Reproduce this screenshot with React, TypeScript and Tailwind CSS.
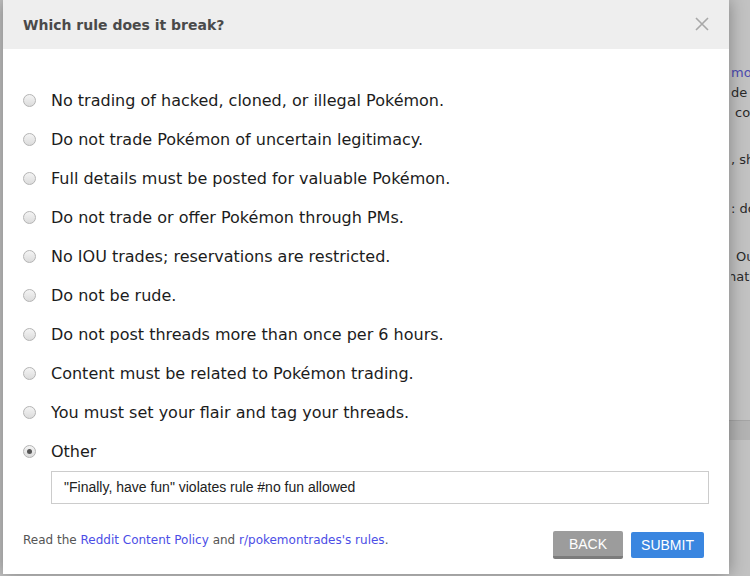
import React from 'react';

const rules = [
  'No trading of hacked, cloned, or illegal Pokémon.',
  'Do not trade Pokémon of uncertain legitimacy.',
  'Full details must be posted for valuable Pokémon.',
  'Do not trade or offer Pokémon through PMs.',
  'No IOU trades; reservations are restricted.',
  'Do not be rude.',
  'Do not post threads more than once per 6 hours.',
  'Content must be related to Pokémon trading.',
  'You must set your flair and tag your threads.',
  'Other',
];

function Radio({ checked }: { checked?: boolean }) {
  return (
    <span className="flex items-center justify-center w-[13px] h-[13px] rounded-full border border-[#b4b4b4] bg-gradient-to-b from-[#f4f4f4] to-[#dcdcdc] shrink-0">
      {checked && <span className="w-[5px] h-[5px] rounded-full bg-[#555]" />}
    </span>
  );
}

export default function App() {
  return (
    <div className="relative w-[750px] h-[576px] overflow-hidden bg-[#c2c2c2] font-['DejaVu_Sans',Verdana,sans-serif]">
      {/* page behind the overlay */}
      <div className="flex">
        <div className="w-[731px] shrink-0" />
        <div className="w-[19px] overflow-hidden flex flex-col text-[13px] leading-[20px] text-[#2a2a2a] whitespace-nowrap">
          <div className="h-[63px]" />
          <div className="text-[#4b4bb0]">mo</div>
          <div>de</div>
          <div className="pl-[4px]">co</div>
          <div className="h-[27px]" />
          <div>, sh</div>
          <div className="h-[29px]" />
          <div>: do</div>
          <div className="h-[28px]" />
          <div className="pl-[5px]">Ou</div>
          <div className="-ml-[3px]">hat</div>
          <div className="h-[123px]" />
        </div>
      </div>
      <div className="absolute right-0 top-[420px] w-[21px] h-[20px] bg-[#b3b3b3] border-t border-[#a5a5a5]" />

      {/* modal */}
      <div className="absolute left-[3px] top-0 w-[726px] h-[574px] bg-white shadow-[0_0_16px_rgba(0,0,0,0.35)] flex flex-col">
        <div className="h-[49px] bg-[#eeeeee] flex items-center justify-between pl-[20px] pr-[20px] shrink-0">
          <h2 className="text-[14px] font-bold text-[#4a4a4a] mt-[1px]">Which rule does it break?</h2>
          <svg width="14" height="14" viewBox="0 0 14 14" className="-mt-[2px]">
            <path d="M1 1L13 13M13 1L1 13" stroke="#a8a8a8" strokeWidth="1.6" />
          </svg>
        </div>

        <div className="flex flex-col pl-[20px] pr-[20px] pt-[32px]">
          {rules.map((r, i) => (
            <label key={r} className="flex items-center h-[39px] gap-[15px] text-[16px] text-[#1c1c1c]">
              <Radio checked={i === rules.length - 1} />
              <span>{r}</span>
            </label>
          ))}
          <div className="ml-[28px] h-[33px] border border-[#cccccc] flex items-center pl-[12px] text-[14px] text-[#222] font-['Liberation_Sans',Arial,sans-serif]">
            "Finally, have fun" violates rule #no fun allowed
          </div>

          <div className="flex justify-between items-start mt-[27px]">
            <p className="text-[12px] text-[#555]">
              Read the <span className="text-[#4c4ee6]">Reddit Content Policy</span> and{' '}
              <span className="text-[#4c4ee6]">r/pokemontrades's rules</span>.
            </p>
            <div className="flex gap-[8px] font-['Liberation_Sans',Arial,sans-serif] text-[14px] text-white mr-[5px]">
              <button className="w-[70px] h-[28px] bg-[#9c9c9c] border-b-[3px] border-[#7c7c7c] rounded-[2px] pt-[1px]">BACK</button>
              <button className="w-[73px] h-[26px] mt-[1px] bg-[#3a86e0] rounded-[2px]">SUBMIT</button>
            </div>
          </div>
        </div>
      </div>
    </div>
  );
}
